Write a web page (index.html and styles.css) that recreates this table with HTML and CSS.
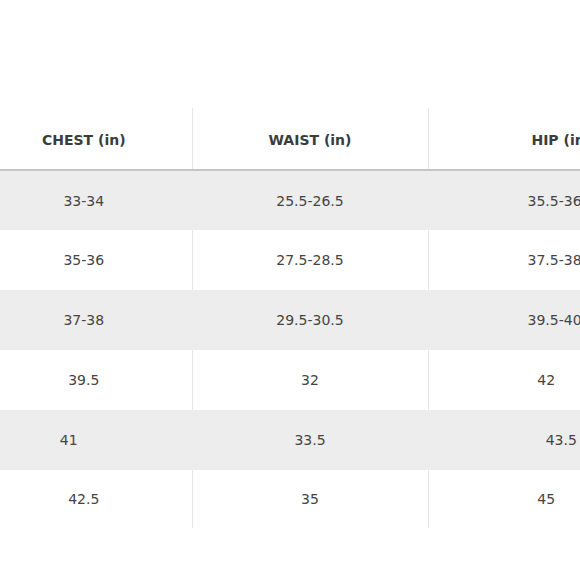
FILE: index.html
```html
<!DOCTYPE html>
<html lang="en">
<head>
<meta charset="utf-8">
<title>Size chart</title>
<link rel="stylesheet" href="styles.css">
</head>
<body>
<div class="chart">
  <table class="sizes">
    <colgroup>
      <col class="c-chest">
      <col class="c-waist">
      <col class="c-hip">
    </colgroup>
    <thead>
      <tr>
        <th class="chest">CHEST (in)</th>
        <th>WAIST (in)</th>
        <th class="hip">HIP (in)</th>
      </tr>
    </thead>
    <tbody>
      <tr class="shade first"><td class="chest">33-34</td><td>25.5-26.5</td><td class="hip">35.5-36.5</td></tr>
      <tr><td class="chest">35-36</td><td>27.5-28.5</td><td class="hip">37.5-38.5</td></tr>
      <tr class="shade"><td class="chest">37-38</td><td>29.5-30.5</td><td class="hip">39.5-40.5</td></tr>
      <tr><td class="chest">39.5</td><td>32</td><td>42</td></tr>
      <tr class="shade"><td class="chest nudge-left">41</td><td>33.5</td><td class="hip">43.5</td></tr>
      <tr class="last"><td class="chest">42.5</td><td>35</td><td>45</td></tr>
    </tbody>
  </table>
</div>
</body>
</html>
```
FILE: styles.css
```css
html, body {
  margin: 0;
  padding: 0;
  background: #ffffff;
  overflow: hidden;
}

.chart {
  padding-top: 108px;
  width: 580px;
  height: 472px;
  overflow: hidden;
}

.sizes {
  border-collapse: collapse;
  table-layout: fixed;
  width: 664px;
  font-family: "DejaVu Sans", Verdana, sans-serif;
  font-size: 14px;
  color: #444444;
}

.c-chest { width: 192px; }
.c-waist { width: 236px; }
.c-hip { width: 236px; }

.sizes th,
.sizes td {
  text-align: center;
  vertical-align: middle;
  padding: 0;
  white-space: nowrap;
}

.sizes th {
  height: 59px;
  font-weight: bold;
  color: #3c3c3c;
  border-bottom: 2px solid #c4c4c4;
  padding-top: 2px;
}

.sizes th + th,
.sizes td + td {
  border-left: 1px solid #e4e4e4;
}

.sizes .shade td {
  background: #ededed;
}

.sizes .shade td + td {
  border-left-color: #ededed;
}

.sizes td {
  height: 60px;
}

.sizes .first td {
  height: 59px;
}

.sizes .last td {
  height: 58px;
}

.sizes .chest {
  padding-right: 24px;
}

.sizes .chest.nudge-left {
  padding-right: 54px;
}

.sizes .hip {
  padding-left: 30px;
}
```
